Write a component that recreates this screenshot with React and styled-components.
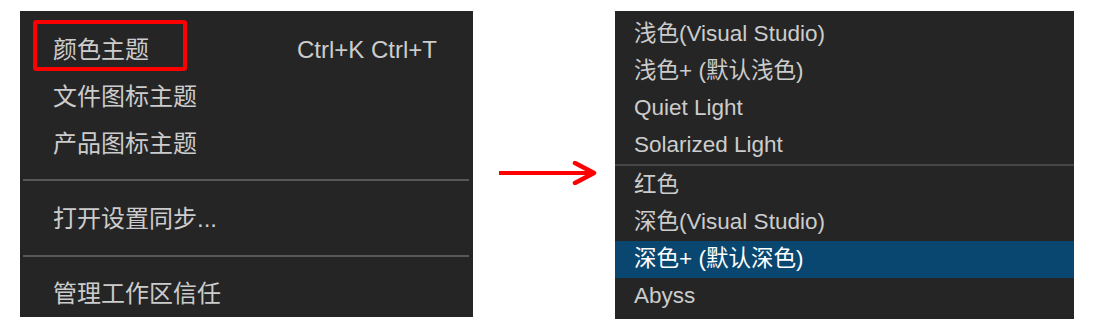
import React from "react";
import styled, { createGlobalStyle } from "styled-components";

const GlobalStyle = createGlobalStyle`
  body {
    margin: 0;
    background: #ffffff;
    font-family: "Liberation Sans", "Noto Sans CJK SC", sans-serif;
  }
`;

const Page = styled.div`
  display: flex;
  align-items: flex-start;
  padding: 11px 0 0 20px;
  width: 1093px;
  height: 333px;
  box-sizing: border-box;
`;

const Menu = styled.div`
  background: #252526;
  width: ${(p) => p.$width}px;
  padding: ${(p) => p.$pad};
  box-sizing: border-box;
  flex-shrink: 0;
  color: #cccccc;
  font-size: ${(p) => p.$fontSize}px;
`;

const Item = styled.div`
  position: relative;
  display: flex;
  align-items: center;
  justify-content: space-between;
  height: ${(p) => p.$height}px;
  padding: ${(p) => p.$inset};
  line-height: 1;
  white-space: nowrap;
  background: ${(p) => (p.$active ? "#094771" : "transparent")};
  color: ${(p) => (p.$active ? "#ffffff" : "inherit")};
`;

const Shortcut = styled.span`
  color: #cccccc;
`;

// red annotation box drawn over the first entry
const Marker = styled.span`
  position: absolute;
  left: 13px;
  top: -6px;
  width: 154px;
  height: 51px;
  border: 4px solid #ff0000;
  border-radius: 3px;
  box-sizing: border-box;
`;

const Separator = styled.div`
  height: 2px;
  margin: ${(p) => p.$margin};
  background: ${(p) => p.$color};
`;

const ArrowSlot = styled.div`
  width: 142px;
  flex-shrink: 0;
  padding: 150px 0 0 24px;
  box-sizing: border-box;
`;

const Arrow = () => (
  <svg width="104" height="24" viewBox="0 0 104 24">
    <line x1="2" y1="12" x2="94" y2="12" stroke="#ff0000" strokeWidth="4" />
    <polyline
      points="78,2 97,12 78,22"
      fill="none"
      stroke="#ff0000"
      strokeWidth="4.5"
      strokeLinecap="round"
      strokeLinejoin="round"
    />
  </svg>
);

const leftTop = ["颜色主题", "文件图标主题", "产品图标主题"];
const lightThemes = ["浅色(Visual Studio)", "浅色+ (默认浅色)", "Quiet Light", "Solarized Light"];
const darkThemes = ["红色", "深色(Visual Studio)", "深色+ (默认深色)", "Abyss"];

export default function App() {
  return (
    <>
      <GlobalStyle />
      <Page>
        <Menu $width={453} $pad="15px 0 0 0" $fontSize={24}>
          {leftTop.map((label, i) => (
            <Item key={label} $height={47} $inset="0 36px 0 33px">
              {i === 0 && <Marker />}
              <span>{label}</span>
              {i === 0 && <Shortcut>Ctrl+K Ctrl+T</Shortcut>}
            </Item>
          ))}
          <Separator $color="#575757" $margin="12px 4px 14px 3px" />
          <Item $height={47} $inset="0 36px 0 33px">
            <span>打开设置同步...</span>
          </Item>
          <Separator $color="#575757" $margin="13px 4px 14px 3px" />
          <Item $height={46} $inset="0 36px 0 33px">
            <span>管理工作区信任</span>
          </Item>
        </Menu>

        <ArrowSlot>
          <Arrow />
        </ArrowSlot>

        <Menu $width={459} $pad="5px 0 4px 0" $fontSize={22.5}>
          {lightThemes.map((label) => (
            <Item key={label} $height={37} $inset="0 19px">
              <span>{label}</span>
            </Item>
          ))}
          <Separator $color="#474747" $margin="0 0 1px 0" />
          {darkThemes.map((label) => (
            <Item key={label} $height={37} $inset="0 19px" $active={label === "深色+ (默认深色)"}>
              <span>{label}</span>
            </Item>
          ))}
        </Menu>
      </Page>
    </>
  );
}
